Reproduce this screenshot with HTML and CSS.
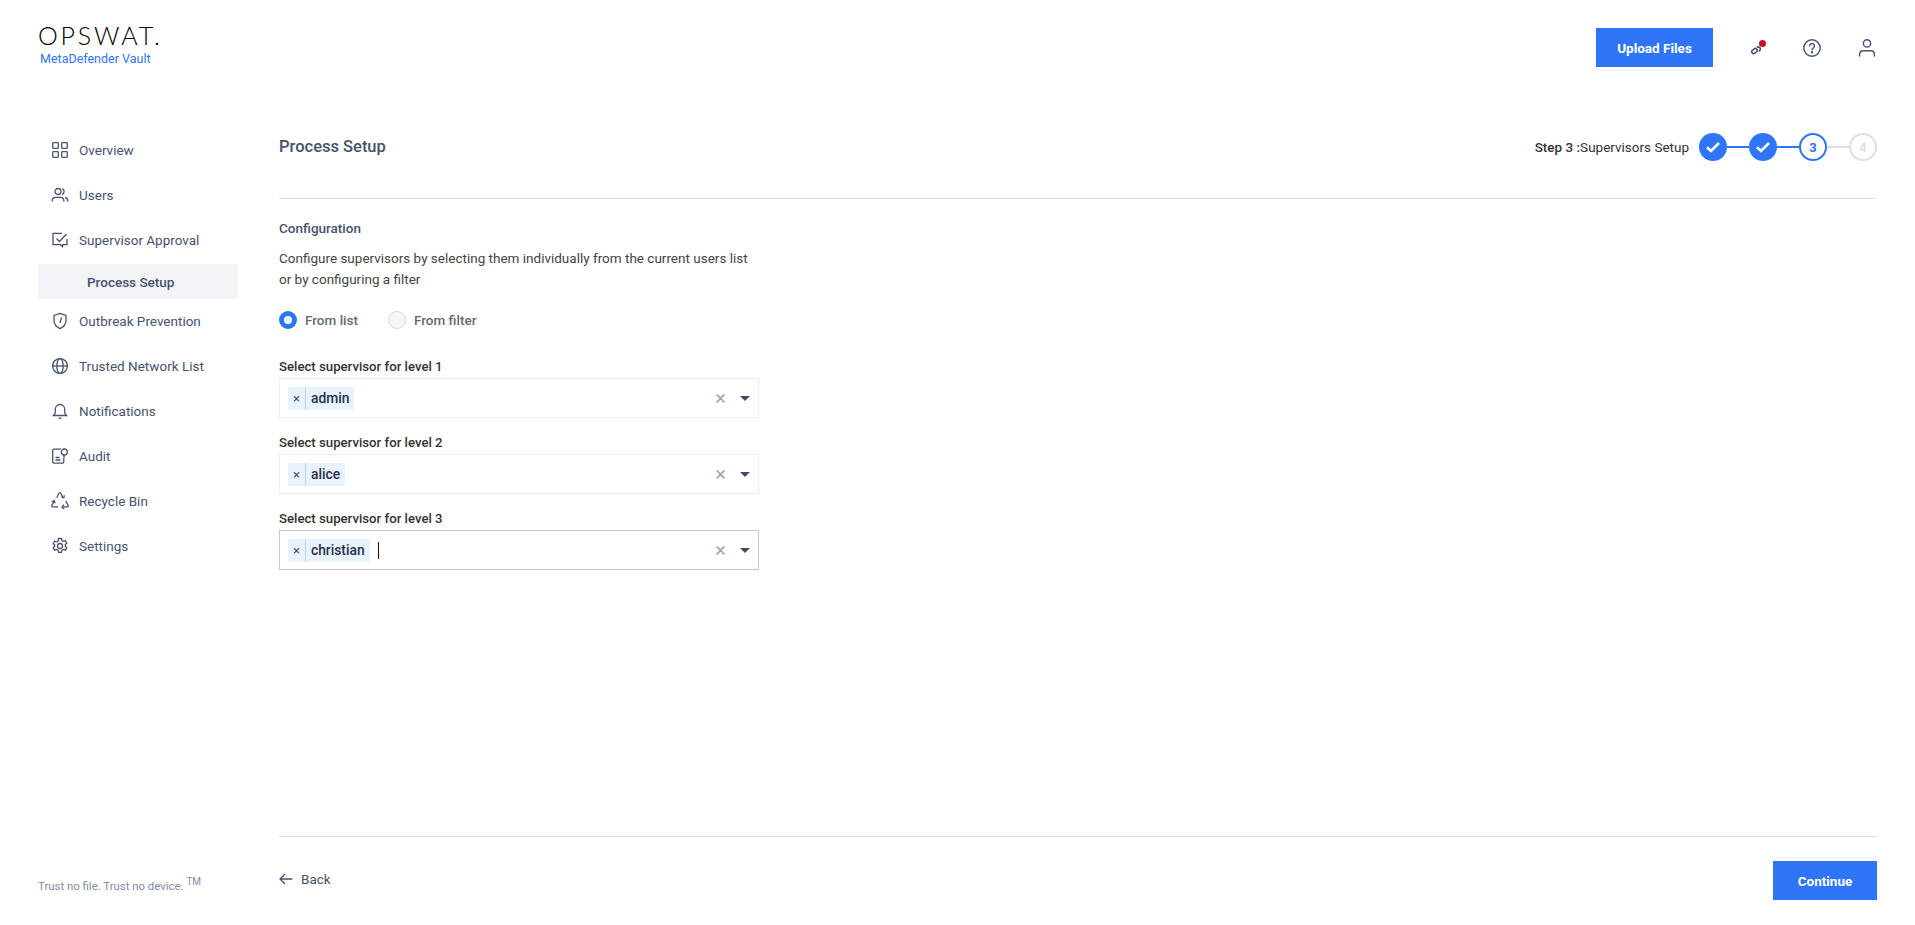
FILE: index.html
```html
<!DOCTYPE html>
<html>
<head>
<meta name="viewport" content="width=device-width, initial-scale=1.0">
<title>Process Setup</title>
<link rel="stylesheet" href="styles.css">
</head>
<body>

<div class="page">
  <header class="topbar">
    <div class="brand">
      <div class="logo">OPSWAT.</div>
      <div class="product">MetaDefender Vault</div>
    </div>
    <div class="top-actions">
      <button class="btn upload-btn">Upload Files</button>
      <span class="top-icon link-icon">
        <svg width="20" height="20" viewBox="0 0 20 20" fill="none" stroke="#46526f" stroke-width="1.500"><rect x="4.500" y="11.200" width="6" height="3.800" rx="1.900" transform="rotate(-40 7.500 13.100)"/><path d="M9.800 9.600a2.100 2.100 0 0 1 2.900-.1 2.100 2.100 0 0 1 .1 2.900l-.9 1"/></svg>
        <i class="red-dot"></i>
      </span>
      <span class="top-icon">
        <svg width="20" height="20" viewBox="0 0 20 20" fill="none" stroke="#46526f" stroke-width="1.400"><circle cx="10" cy="10" r="8.200"/><path d="M7.600 7.800a2.400 2.400 0 1 1 3.800 2c-.9.600-1.400 1-1.400 2" stroke-linecap="round"/><circle cx="10" cy="14.200" r=".5" fill="#46526f"/></svg>
      </span>
      <span class="top-icon">
        <svg width="20" height="20" viewBox="0 0 20 20" fill="none" stroke="#46526f" stroke-width="1.400"><circle cx="10" cy="5.400" r="3.600"/><path d="M2.600 18v-1.600c0-2.200 1.800-3.600 4-3.600h6.800c2.200 0 4 1.400 4 3.600V18" stroke-linecap="round"/></svg>
      </span>
    </div>
  </header>

  <div class="body-row">
    <aside class="sidebar">
      <nav class="nav">
        <a class="nav-item">
          <svg class="nav-icon" viewBox="0 0 18 18"><rect x="1.700" y="1.700" width="5.600" height="5.600" rx=".8"/><rect x="10.700" y="1.700" width="5.600" height="5.600" rx=".8"/><rect x="1.700" y="10.700" width="5.600" height="5.600" rx=".8"/><rect x="10.700" y="10.700" width="5.600" height="5.600" rx=".8"/></svg>
          Overview
        </a>
        <a class="nav-item">
          <svg class="nav-icon" viewBox="0 0 18 18"><circle cx="7" cy="5.500" r="3"/><path d="M1.200 15.500v-1c0-2 1.600-3.200 3.400-3.200h4.800c1.800 0 3.400 1.200 3.400 3.200v1M11.200 2.700a3 3 0 0 1 0 5.600M14 11.500c1.600.3 2.800 1.400 2.800 3v1"/></svg>
          Users
        </a>
        <a class="nav-item">
          <svg class="nav-icon" viewBox="0 0 18 18"><path d="M11 2.300H2v11.400h7.500l2 2 .3-2H16V8"/><path d="M5.500 7.500l3 3 7-7.500"/></svg>
          Supervisor Approval
        </a>
        <a class="nav-item sub-item">Process Setup</a>
        <a class="nav-item">
          <svg class="nav-icon" viewBox="0 0 18 18"><path d="M9 1.400l6 2.100v5.300c0 3.600-2.600 6.200-6 7.800-3.400-1.600-6-4.200-6-7.800V3.500z"/><path d="M10.500 5.500L9 11"/></svg>
          Outbreak Prevention
        </a>
        <a class="nav-item">
          <svg class="nav-icon" viewBox="0 0 18 18"><circle cx="9" cy="9" r="7.400"/><ellipse cx="9" cy="9" rx="3.200" ry="7.400"/><path d="M1.600 9h14.800"/></svg>
          Trusted Network List
        </a>
        <a class="nav-item">
          <svg class="nav-icon" viewBox="0 0 18 18"><path d="M2.500 13.500c1-1 1.800-1.600 1.800-3.500V7.200a4.700 4.700 0 0 1 9.400 0V10c0 1.900.8 2.500 1.800 3.500z"/><path d="M7.500 16.200h3"/></svg>
          Notifications
        </a>
        <a class="nav-item">
          <svg class="nav-icon" viewBox="0 0 18 18"><path d="M10 2.200H3a1.300 1.300 0 0 0-1.300 1.300v11.300A1.300 1.300 0 0 0 3 16.100h8.500a1.300 1.300 0 0 0 1.300-1.300V11"/><circle cx="13.300" cy="5" r="3"/><path d="M13 8v3M4.500 10.500h4M4.500 13h5"/></svg>
          Audit
        </a>
        <a class="nav-item">
          <svg class="nav-icon recycle" viewBox="0 0 18 18"><path d="M5.800 5.600L8 1.200c.4-.7 1.400-.7 1.800 0l2.200 4.300"/><path d="M13.400 3.400L12.800 5.800l-2.400-.6"/><path d="M14.800 9l2.300 4.400c.4.700-.1 1.500-.9 1.500h-4.600"/><path d="M13 12.600l-2 2.300 2 2.100"/><path d="M7.200 14.900H1.800c-.8 0-1.300-.8-.9-1.500l2.400-4.600"/><path d="M.8 9.700l2.500-.9.800 2.500"/></svg>
          Recycle Bin
        </a>
        <a class="nav-item">
          <svg class="nav-icon" viewBox="0 0 18 18"><circle cx="9" cy="9" r="2.500"/><path d="M7.600 1.500h2.800l.5 2.100 1.500.8 2-.7 1.400 2.400-1.500 1.500v1.700l1.500 1.500-1.400 2.400-2-.7-1.500.8-.5 2.100H7.600l-.5-2.100-1.500-.8-2 .7-1.400-2.400 1.500-1.500V8.100L2.200 6.600l1.400-2.400 2 .7 1.500-.8z"/></svg>
          Settings
        </a>
      </nav>
      <div class="tagline">Trust no file. Trust no device. <sup>TM</sup></div>
    </aside>

    <main class="content">
      <div class="page-head">
        <h1 class="page-title">Process Setup</h1>
        <div class="stepper">
          <span class="step-text"><b>Step 3 :</b>Supervisors Setup</span>
          <span class="step done"><svg width="16" height="12" viewBox="0 0 16 12" fill="none" stroke="#fff" stroke-width="2.600"><path d="M2 6.200l4 3.800 8-8"/></svg></span>
          <i class="step-line"></i>
          <span class="step done"><svg width="16" height="12" viewBox="0 0 16 12" fill="none" stroke="#fff" stroke-width="2.600"><path d="M2 6.200l4 3.800 8-8"/></svg></span>
          <i class="step-line"></i>
          <span class="step current">3</span>
          <i class="step-line off"></i>
          <span class="step todo">4</span>
        </div>
      </div>

      <section class="config">
        <h2 class="config-title">Configuration</h2>
        <p class="config-desc">Configure supervisors by selecting them individually from the current users list<br>or by configuring a filter</p>
        <div class="radios">
          <label class="radio"><i class="radio-dot on"></i>From list</label>
          <label class="radio"><i class="radio-dot"></i>From filter</label>
        </div>

        <div class="field">
          <div class="field-label">Select supervisor for level 1</div>
          <div class="select">
            <span class="tag"><span class="tag-x">&times;</span><span class="tag-name">admin</span></span>
            <span class="select-clear">&times;</span>
            <i class="select-arrow"></i>
          </div>
        </div>
        <div class="field">
          <div class="field-label">Select supervisor for level 2</div>
          <div class="select">
            <span class="tag"><span class="tag-x">&times;</span><span class="tag-name">alice</span></span>
            <span class="select-clear">&times;</span>
            <i class="select-arrow"></i>
          </div>
        </div>
        <div class="field">
          <div class="field-label">Select supervisor for level 3</div>
          <div class="select focused">
            <span class="tag"><span class="tag-x">&times;</span><span class="tag-name">christian</span></span>
            <i class="caret"></i>
            <span class="select-clear">&times;</span>
            <i class="select-arrow"></i>
          </div>
        </div>
      </section>

      <footer class="actions">
        <a class="back">
          <svg width="14" height="12" viewBox="0 0 14 12" fill="none" stroke="#46526f" stroke-width="1.300"><path d="M13.500 6H1M6 1L1 6l5 5"/></svg>
          Back
        </a>
        <button class="btn continue-btn">Continue</button>
      </footer>
    </main>
  </div>
</div>

</body>
</html>
```

FILE: styles.css
```css
* {box-sizing: border-box;}
html, body {margin: 0; padding: 0;}
body {
  font-family: Roboto, "Liberation Sans", sans-serif;
  font-size: 13.5px;
  color: #46526f;
  background: #fff;
}
.page {
  height: 925px;
  display: flex;
  flex-direction: column;
  padding: 0 38px 25px;
}
.topbar {
  height: 100px;
  flex: none;
  display: flex;
  justify-content: space-between;
  align-items: flex-start;
}
.brand {padding-top: 19px;}
.logo {
  font-family: Lato, sans-serif;
  font-weight: 300;
  font-size: 25px;
  line-height: 32px;
  letter-spacing: 2.8px;
  color: #000;
}
.product {
  font-size: 12.500px;
  line-height: 16px;
  color: #2f75f7;
  padding-left: 2px;
}
.top-actions {
  display: flex;
  align-items: center;
  padding-top: 28px;
}
.btn {
  border: 0;
  background: #2f75f7;
  color: #fff;
  font-family: inherit;
  font-weight: 700;
  font-size: 13.5px;
  height: 39px;
}
.upload-btn {width: 117px; margin-right: 34px;}
.top-icon {
  position: relative;
  display: flex;
  align-items: center;
  justify-content: center;
  width: 20px;
  height: 20px;
  margin-left: 35px;
}
.upload-btn + .top-icon {margin-left: 0;}
.red-dot {
  position: absolute;
  top: 2px;
  right: 1px;
  width: 7px;
  height: 7px;
  border-radius: 50%;
  background: #d00c1f;
}
.body-row {
  flex: 1;
  display: flex;
  min-height: 0;
}
.sidebar {
  width: 200px;
  flex: none;
  margin-right: 41px;
  display: flex;
  flex-direction: column;
  justify-content: space-between;
}
.nav {
  display: flex;
  flex-direction: column;
  padding-top: 27px;
}
.nav-item {
  display: flex;
  align-items: center;
  height: 45px;
  padding-left: 13px;
  gap: 10px;
}
.nav-icon {
  width: 18px;
  height: 18px;
  flex: none;
  fill: none;
  stroke: #46526f;
  stroke-width: 1.300;
}
.sub-item {
  height: 35px;
  margin: 2px 0 -1px;
  padding-left: 49px;
  background: #f2f4f8;
  font-weight: 500;
}
.tagline {
  font-size: 11.400px;
  color: #7f8aaa;
  margin-bottom: 7px;
}
.tagline sup {font-size: 10px; line-height: 0;}
.content {
  flex: 1;
  min-width: 0;
  display: flex;
  flex-direction: column;
}
.page-head {
  height: 99px;
  flex: none;
  border-bottom: 1px solid #dfdfdf;
  display: flex;
  justify-content: space-between;
  align-items: flex-start;
  padding-top: 33px;
}
.page-title {
  margin: 0;
  font-size: 16.500px;
  font-weight: 500;
  line-height: 28px;
}
.stepper {
  display: flex;
  align-items: center;
  color: #333;
}
.step-text {margin-right: 10px;}
.step-text b {font-weight: 500;}
.step {
  width: 28px;
  height: 28px;
  border-radius: 50%;
  display: flex;
  align-items: center;
  justify-content: center;
  font-weight: 700;
  font-size: 13px;
}
.step.done {background: #2f75f7;}
.step.current {border: 2px solid #2f75f7; color: #2f75f7;}
.step.todo {border: 2px solid #dfdfdf; color: #dfdfdf;}
.step-line {width: 22px; height: 2px; background: #2f75f7;}
.step-line.off {background: #dfdfdf;}
.config {flex: 1; padding-top: 20px;}
.config-title {
  margin: 0;
  font-size: 13.500px;
  font-weight: 500;
  line-height: 18px;
}
.config-desc {
  margin: 11px 0 0;
  line-height: 21px;
  color: #444;
}
.radios {
  display: flex;
  gap: 30px;
  margin-top: 21px;
}
.radio {
  display: flex;
  align-items: center;
  gap: 8px;
  font-weight: 500;
  color: #5f6e6c;
  line-height: 18px;
}
.radio-dot {
  width: 18px;
  height: 18px;
  border-radius: 50%;
  border: 1px solid #d8d8d8;
  background: #f6f6f6;
}
.radio-dot.on {border: 5px solid #2f75f7; background: #fff;}
.radios + .field {margin-top: 29px;}
.field + .field {margin-top: 16px;}
.field-label {
  font-size: 13.200px;
  line-height: 17px;
  font-weight: 500;
  color: #333;
  margin-bottom: 3px;
}
.select {
  width: 480px;
  height: 40px;
  border: 1px solid #ebeef5;
  display: flex;
  align-items: center;
  padding: 0 8px;
}
.select.focused {border-color: #c8c8c8;}
.tag {
  display: flex;
  height: 23px;
  align-items: center;
  background: #e8f3ff;
  border-radius: 2px;
  color: #26314a;
}
.tag-x {
  width: 18px;
  text-align: center;
  border-right: 1px solid #b5d5f7;
  line-height: 23px;
  font-size: 13px;
  color: #46526f;
}
.tag-name {padding: 0 5px; font-weight: 500; font-size: 13.800px;}
.caret {
  width: 1px;
  height: 17px;
  background: #111;
  margin-left: 8px;
}
.select-clear {
  margin-left: auto;
  font-size: 20px;
  color: #a8a8a8;
  margin-right: 14px;
  line-height: 20px;
}
.select-arrow {
  width: 0;
  height: 0;
  border-left: 5.500px solid transparent;
  border-right: 5.500px solid transparent;
  border-top: 5px solid #3d4a6b;
}
.actions {
  flex: none;
  height: 64px;
  border-top: 1px solid #dfdfdf;
  display: flex;
  justify-content: space-between;
  align-items: flex-end;
}
.back {
  display: flex;
  align-items: center;
  gap: 8px;
  height: 37px;
  padding-bottom: 2px;
  margin-bottom: 2px;
}
.continue-btn {width: 104px;}
```
